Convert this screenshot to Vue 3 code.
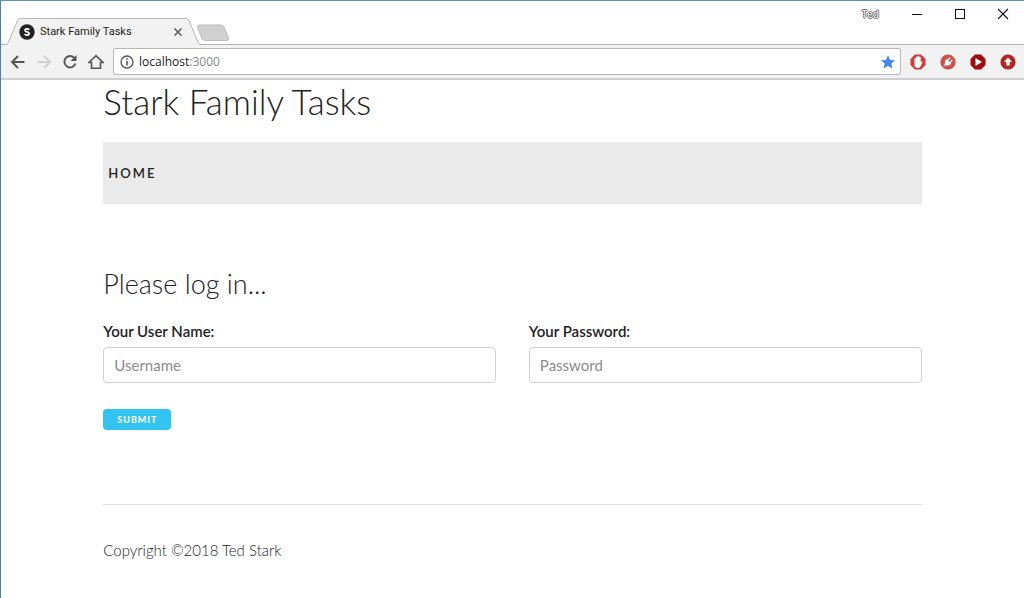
<script setup>
import { ref } from 'vue'

const address = ref('localhost:3000')
const username = ref('')
const password = ref('')
</script>

<template>
  <div class="window">
    <header class="chrome">
      <div class="tabstrip">
        <div class="tab">
          <svg class="tab-shape" viewBox="0 0 196 28" width="196" height="28" aria-hidden="true">
            <path d="M0 26.500H1Q2.500 26.500 3.300 24.500L12.500 2.500Q13.300 .5 15 .5H181Q183 .5 184 2.500L193 24.500Q194 26.500 196 26.500V28H0Z" fill="#f2f2f2" />
            <path d="M0 26.500H1Q2.500 26.500 3.300 24.500L12.500 2.500Q13.300 .5 15 .5H181Q183 .5 184 2.500L193 24.500Q194 26.500 196 26.500" fill="none" stroke="#b4b4b4" />
          </svg>
          <svg class="favicon" viewBox="0 0 16 16" width="16" height="16" aria-hidden="true">
            <circle cx="8" cy="8" r="7.700" fill="#222" />
            <path d="M10.300 5.800Q9.600 4.900 8 4.900Q6 4.900 6 6.300Q6 7.500 8 7.900Q10.200 8.300 10.200 9.600Q10.200 11.100 8 11.100Q6.300 11.100 5.600 10.100" fill="none" stroke="#fff" stroke-width="1.700" />
          </svg>
          <span class="tab-title">Stark Family Tasks</span>
          <button class="icon-button tab-close" type="button" aria-label="Close tab">
            <svg viewBox="0 0 10 10" width="10" height="10"><path d="M1.500 1.500L8.500 8.500M8.500 1.500L1.500 8.500" stroke="#5a5a5a" stroke-width="1.500" /></svg>
          </button>
        </div>
        <button class="icon-button new-tab" type="button" aria-label="New tab">
          <svg viewBox="0 0 34 18" width="34" height="18">
            <path d="M3 1H25Q27 1 28 3L32.500 14Q33 16.500 31 16.500H9Q7 16.500 6 14.500L1.500 3.500Q1 1 3 1Z" fill="#d0d0d0" stroke="#bcbcbc" />
          </svg>
        </button>
        <div class="window-controls">
          <span class="profile">Ted</span>
          <button class="icon-button control" type="button" aria-label="Minimize">
            <svg viewBox="0 0 12 12" width="12" height="12"><path d="M1 6.500H11" stroke="#111" /></svg>
          </button>
          <button class="icon-button control" type="button" aria-label="Maximize">
            <svg viewBox="0 0 12 12" width="12" height="12"><rect x="1.500" y="1.500" width="9" height="9" fill="none" stroke="#111" /></svg>
          </button>
          <button class="icon-button control" type="button" aria-label="Close">
            <svg viewBox="0 0 12 12" width="12" height="12"><path d="M1 1L11 11M11 1L1 11" stroke="#111" stroke-width="1.100" /></svg>
          </button>
        </div>
      </div>

      <div class="toolbar">
        <button class="icon-button nav" type="button" aria-label="Back">
          <svg viewBox="0 0 16 16" width="16" height="16"><path d="M14.500 8H2.500M8 2L2 8L8 14" fill="none" stroke="#555" stroke-width="1.900" /></svg>
        </button>
        <button class="icon-button nav" type="button" aria-label="Forward">
          <svg viewBox="0 0 16 16" width="16" height="16"><path d="M1.500 8H13.500M8 2L14 8L8 14" fill="none" stroke="#d2d2d2" stroke-width="1.900" /></svg>
        </button>
        <button class="icon-button nav" type="button" aria-label="Reload">
          <svg viewBox="0 0 16 16" width="16" height="16">
            <path d="M12.600 4.200A5.700 5.700 0 1 0 13.500 9.500" fill="none" stroke="#555" stroke-width="1.900" />
            <path d="M14.500 1V7H8.500Z" fill="#555" />
          </svg>
        </button>
        <button class="icon-button nav" type="button" aria-label="Home">
          <svg viewBox="0 0 16 16" width="16" height="16"><path d="M1 8.500L8 1.700L15 8.500H12.500V14.200H3.500V8.500Z" fill="none" stroke="#555" stroke-width="1.600" /></svg>
        </button>
        <div class="omnibox">
          <svg viewBox="0 0 14 14" width="14" height="14" aria-hidden="true">
            <circle cx="7" cy="7" r="6" fill="none" stroke="#555" stroke-width="1.300" />
            <path d="M7 6V10.500M7 3.300V4.800" stroke="#555" stroke-width="1.600" />
          </svg>
          <a class="address" href="#" aria-label="Address">{{ address.split(':')[0] }}<span class="port">:{{ address.split(':')[1] }}</span></a>
          <button class="icon-button" type="button" aria-label="Bookmark">
            <svg viewBox="0 0 16 16" width="16" height="16"><path d="M8 1L10 6L15 6.200L11.200 9.500L12.500 14.500L8 11.700L3.500 14.500L4.800 9.500L1 6.200L6 6Z" fill="#4285f4" /></svg>
          </button>
        </div>
        <div class="extensions">
          <button class="icon-button" type="button" aria-label="Ad blocker">
            <svg viewBox="0 0 16 16" width="16" height="16">
              <path d="M5 .5H11L15.500 5V11L11 15.500H5L.5 11V5Z" fill="#d13b3b" />
              <path d="M4.500 8V4.300Q5.300 3.400 6 4.300V3Q6.800 1.900 7.600 3V2.300Q8.500 1.400 9.200 2.300V3.200Q10 2.400 10.700 3.400V8.300L11.400 7.500Q12.700 7.300 12.400 8.600L10.300 12.800Q9.700 14 8 14Q4.500 14 4.500 11Z" fill="#fff" />
            </svg>
          </button>
          <button class="icon-button" type="button" aria-label="Connector">
            <svg viewBox="0 0 16 16" width="16" height="16">
              <circle cx="8" cy="8" r="7.600" fill="#cb5047" />
              <path d="M6 6L10.200 10.200Q8 12.300 5.800 10.900L3.800 12.500L3.300 12L5 10Q3.900 8 6 6Z" fill="#fff" />
              <path d="M7.500 6.500L10.200 3.800M9.700 8.700L12.300 6M6 5.500L10.700 10.200" stroke="#fff" stroke-width="1.300" />
            </svg>
          </button>
          <button class="icon-button" type="button" aria-label="Video">
            <svg viewBox="0 0 16 16" width="16" height="16">
              <path d="M5 .5H11L15.500 5V11L11 15.500H5L.5 11V5Z" fill="#a00b0b" />
              <path d="M5.500 4V12L12 8Z" fill="#fff" />
            </svg>
          </button>
          <button class="icon-button" type="button" aria-label="Update">
            <svg viewBox="0 0 16 16" width="16" height="16">
              <circle cx="8" cy="8" r="7.600" fill="#b52522" />
              <path d="M8 3.500L12 8H9.700V11.500H6.300V8H4Z" fill="#fff" />
            </svg>
          </button>
        </div>
      </div>
    </header>

    <div class="container">
      <h1>Stark Family Tasks</h1>
      <nav class="navbar"><a href="#">HOME</a></nav>
      <main>
        <h2>Please log in...</h2>
        <form @submit.prevent>
          <div class="fields">
            <div class="field">
              <label for="username">Your User Name:</label>
              <input id="username" v-model="username" type="text" placeholder="Username">
            </div>
            <div class="field">
              <label for="password">Your Password:</label>
              <input id="password" v-model="password" type="password" placeholder="Password">
            </div>
          </div>
          <button class="submit" type="submit">SUBMIT</button>
        </form>
      </main>
      <footer>Copyright ©2018 Ted Stark</footer>
    </div>
  </div>
</template>

<style>
body {
  margin: 0;
  background: #fff;
}
</style>

<style scoped>
* {
  box-sizing: border-box;
}

.window {
  min-height: 100vh;
  border-top: 1px solid #5b93b8;
  border-left: 1px solid #4384b0;
  font-family: Lato, "Open Sans", sans-serif;
  color: #222;
}

.chrome {
  font-family: "Open Sans", "Noto Sans", sans-serif;
}

.icon-button {
  display: inline-flex;
  flex: none;
  align-items: center;
  justify-content: center;
  padding: 0;
  border: 0;
  background: none;
}

svg {
  display: block;
  flex: none;
}

.tabstrip {
  display: flex;
  align-items: flex-end;
  height: 44px;
  padding-left: 4px;
  background: linear-gradient(#b4b4b4, #b4b4b4) 0 100% / 100% 1px no-repeat #fff;
}

.tab {
  position: relative;
  display: flex;
  align-items: center;
  width: 196px;
  height: 27px;
  padding: 0 18px 0 14px;
}

.tab-shape {
  position: absolute;
  top: 0;
  left: 0;
}

.favicon,
.tab-title,
.tab-close {
  position: relative;
}

.tab-title {
  flex: 1;
  margin-left: 5px;
  font-family: Roboto, sans-serif;
  font-size: 11px;
  line-height: 16px;
  white-space: nowrap;
}

.new-tab {
  margin: 0 0 3px -5px;
}

.window-controls {
  display: flex;
  align-items: center;
  align-self: flex-start;
  height: 26px;
  margin-left: auto;
}

.profile {
  margin-right: 16px;
  font-size: 10px;
  color: #fff;
  text-shadow: 1px 0 #666, -1px 0 #666, 0 1px #666, 0 -1px #666;
}

.control {
  width: 43px;
  height: 26px;
}

.toolbar {
  display: flex;
  align-items: center;
  height: 35px;
  padding: 0 8px;
  border-bottom: 2px solid #d0d0d0;
  background: #f2f2f2;
}

.nav {
  width: 18px;
  margin-right: 8px;
}

.omnibox {
  display: flex;
  flex: 1;
  align-items: center;
  height: 27px;
  padding: 0 4px 0 6px;
  border: 1px solid #b8b8b8;
  border-radius: 2px;
  background: #fff;
}

.address {
  flex: 1;
  margin-left: 5px;
  font-size: 12px;
  line-height: 18px;
  color: #222;
  text-decoration: none;
}

.port {
  color: #888;
}

.extensions {
  display: flex;
  gap: 14px;
  margin-left: 9px;
}

.container {
  width: 80%;
  margin: 0 auto;
}

h1,
h2 {
  margin: 0;
  font-weight: 300;
}

h1 {
  padding-bottom: 20px;
  font-size: 35px;
  line-height: 42px;
}

.navbar {
  display: flex;
  height: 62px;
  padding: 0 5px;
  align-items: center;
  background: #eaeaea;
}

.navbar a {
  font-size: 13px;
  font-weight: 600;
  line-height: 20px;
  letter-spacing: 2px;
  color: #222;
  text-decoration: none;
}

main {
  padding: 62px 0 74px;
  border-bottom: 1px solid #e1e1e1;
}

h2 {
  font-size: 27px;
  line-height: 36px;
}

.fields {
  display: grid;
  grid-template-columns: 1fr 1fr;
  gap: 4%;
  margin-top: 18px;
}

.field label {
  display: block;
  margin-bottom: 5px;
  font-size: 15px;
  font-weight: 600;
  line-height: 22px;
}

.field input {
  display: block;
  width: 100%;
  height: 36px;
  padding: 6px 10px;
  border: 1px solid #d1d1d1;
  border-radius: 4px;
  background: #fff;
  font: 400 15px/22px Lato, sans-serif;
  color: #222;
}

.field input::placeholder {
  color: #8b8b8b;
  opacity: 1;
}

.submit {
  display: block;
  margin-top: 26px;
  padding: 0 14px;
  border: 0;
  border-radius: 4px;
  background: #33c3f0;
  font: 700 9px/21px Lato, sans-serif;
  letter-spacing: 1px;
  color: #fff;
}

footer {
  padding: 34px 0;
  font-size: 15px;
  font-weight: 300;
  line-height: 22px;
}
</style>
